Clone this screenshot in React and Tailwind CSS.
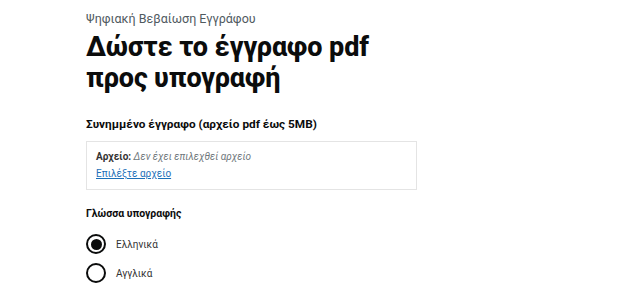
export default function App() {
  return (
    <div className="min-h-[300px] bg-white font-['Roboto','Liberation_Sans',sans-serif] text-[#0b0c0c]">
      <div className="pl-[86px] pt-[11px]">
        <p className="text-[12.5px] leading-[16px] text-[#505a5f]">Ψηφιακή Βεβαίωση Εγγράφου</p>
        <h1 className="mt-[5px] w-[300px] text-[27px] font-extrabold leading-[31px] tracking-[-0.1px]">
          Δώστε το έγγραφο pdf προς υπογραφή
        </h1>
        <p className="mt-[23px] text-[11.8px] font-bold leading-[14px]">
          Συνημμένο έγγραφο (αρχείο pdf έως 5MB)
        </p>
        <div className="mt-[10px] flex h-[49px] w-[331px] flex-col justify-center gap-[5px] border border-[#e4e4e4] px-[9px]">
          <p className="text-[10px] leading-[12px] text-[#333]">
            <span className="font-bold">Αρχείο:</span>{' '}
            <span className="italic text-[#6f777b]">Δεν έχει επιλεχθεί αρχείο</span>
          </p>
          <a href="#" className="text-[10px] leading-[12px] text-[#1d70b8] underline">
            Επιλέξτε αρχείο
          </a>
        </div>
        <p className="mt-[17px] text-[10.5px] font-bold leading-[14px]">Γλώσσα υπογραφής</p>
        <div className="mt-[13px] flex flex-col gap-[9px]">
          <label className="flex items-center gap-[10px]">
            <span className="flex h-[20px] w-[20px] items-center justify-center rounded-full border-2 border-[#0b0c0c]">
              <span className="h-[11px] w-[11px] rounded-full bg-[#0b0c0c]" />
            </span>
            <span className="text-[10px] text-[#333]">Ελληνικά</span>
          </label>
          <label className="flex items-center gap-[10px]">
            <span className="h-[20px] w-[20px] rounded-full border-2 border-[#0b0c0c]" />
            <span className="text-[10px] text-[#333]">Αγγλικά</span>
          </label>
        </div>
      </div>
    </div>
  );
}
